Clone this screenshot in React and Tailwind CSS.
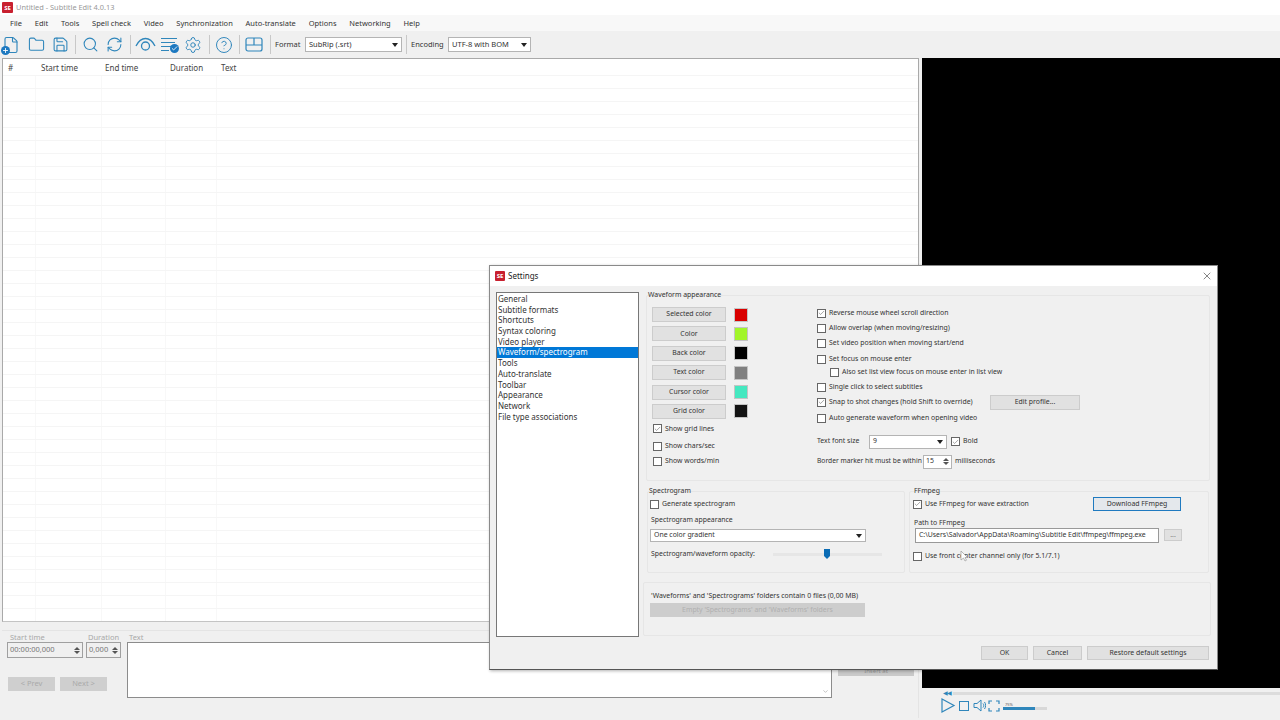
import { File, Folder, Save, Search, RefreshCw, Settings, CircleHelp, Plus, Check, ChevronDown, X } from "lucide-react";

const menus = ["File", "Edit", "Tools", "Spell check", "Video", "Synchronization", "Auto-translate", "Options", "Networking", "Help"];
const settingsPages = ["General", "Subtitle formats", "Shortcuts", "Syntax coloring", "Video player", "Waveform/spectrogram", "Tools", "Auto-translate", "Toolbar", "Appearance", "Network", "File type associations"];
const colorRows = [
  ["Selected color", "bg-[#d90000]"],
  ["Color", "bg-[#a2f52a]"],
  ["Back color", "bg-[#000000]"],
  ["Text color", "bg-[#808080]"],
  ["Cursor color", "bg-[#45e8c0]"],
  ["Grid color", "bg-[#141414]"],
];
const rows = Array.from({ length: 42 });

function Logo({ small }) {
  return (
    <div className={`flex items-center justify-center bg-[#c8202f] rounded-[1px] text-white font-bold leading-none ${small ? "w-[10px] h-[10px] text-[6px]" : "w-[11px] h-[11px] text-[6px]"}`}>
      SE
    </div>
  );
}

function Caret() {
  return <span className="w-0 h-0 border-l-[3px] border-r-[3px] border-t-[4px] border-l-transparent border-r-transparent border-t-[#222]" />;
}

function Spinner() {
  return (
    <span className="flex flex-col gap-[1px] items-center">
      <span className="w-0 h-0 border-l-[3px] border-r-[3px] border-b-[3px] border-l-transparent border-r-transparent border-b-[#555]" />
      <span className="w-0 h-0 border-l-[3px] border-r-[3px] border-t-[3px] border-l-transparent border-r-transparent border-t-[#555]" />
    </span>
  );
}

function Box({ checked, children, className = "" }) {
  return (
    <div className={`flex items-center h-[15px] gap-[3px] ${className}`}>
      <span className="flex items-center justify-center w-[9px] h-[9px] bg-white border border-[#666] shrink-0">
        {checked && <Check size={8} strokeWidth={1.5} className="text-[#333]" />}
      </span>
      <span className="whitespace-nowrap">{children}</span>
    </div>
  );
}

function Btn({ children, focused, className = "" }) {
  return (
    <div className={`flex items-center justify-center whitespace-nowrap ${focused ? "bg-[#e4e8ec] border-[1.5px] border-[#1f7ac0]" : "bg-[#e1e1e1] border border-[#cccccc]"} ${className}`}>
      {children}
    </div>
  );
}

function Combo({ value, className = "" }) {
  return (
    <div className={`flex items-center justify-between bg-white border border-[#b4b4b4] px-[3px] ${className}`}>
      <span className="whitespace-nowrap">{value}</span>
      <Caret />
    </div>
  );
}

function Group({ title, titleClass = "", className = "", children }) {
  return (
    <div className={`border border-[#e6e6e6] rounded-[2px] ${className}`}>
      {title && <div className={`-mt-[7px] h-[11px] leading-[11px] ${titleClass}`}>{title}</div>}
      {children}
    </div>
  );
}

function TopToolbar() {
  return (
    <div className="h-[27px] flex items-center bg-[#f0f0f0] text-[#2f86bb] text-[7.5px]">
      <div className="relative w-[18px] ml-[2px] mr-[8px]">
        <File size={18} strokeWidth={1.5} />
        <span className="absolute -left-[1px] top-[10px] w-[9px] h-[9px] rounded-full bg-[#1c78c0] flex items-center justify-center">
          <Plus size={7} strokeWidth={3} className="text-white" />
        </span>
      </div>
      <Folder size={17} strokeWidth={1.5} className="mr-[7px]" />
      <Save size={17} strokeWidth={1.5} className="mr-[6px]" />
      <span className="w-px h-[19px] bg-[#c8c8c8] mr-[6px]" />
      <Search size={17} strokeWidth={1.5} className="mr-[7px]" />
      <RefreshCw size={17} strokeWidth={1.5} className="mr-[7px]" />
      <span className="w-px h-[19px] bg-[#c8c8c8] mr-[4px]" />
      <svg width="21" height="17" viewBox="0 0 21 17" fill="none" stroke="currentColor" strokeWidth="1.3" className="mr-[5px]">
        <path d="M1 10C4 4 8 2.500 10.500 2.500S17 4 20 10" />
        <circle cx="10.500" cy="10" r="4" />
      </svg>
      <div className="relative w-[18px] h-[17px] mr-[5px]">
        <div className="flex flex-col gap-[3px] pt-[2px]">
          <span className="block w-[16px] h-[1px] bg-[#2f86bb]" />
          <span className="block w-[14px] h-[1px] bg-[#2f86bb]" />
          <span className="block w-[10px] h-[1px] bg-[#2f86bb]" />
          <span className="block w-[8px] h-[1px] bg-[#2f86bb]" />
        </div>
        <span className="absolute right-0 bottom-0 w-[9px] h-[9px] rounded-full bg-[#1c78c0] flex items-center justify-center">
          <Check size={7} strokeWidth={3} className="text-white" />
        </span>
      </div>
      <Settings size={18} strokeWidth={1.3} className="mr-[7px]" />
      <span className="w-px h-[19px] bg-[#c8c8c8] mr-[5px]" />
      <CircleHelp size={18} strokeWidth={1.3} className="mr-[6px]" />
      <span className="w-px h-[19px] bg-[#c8c8c8] mr-[5px]" />
      <svg width="18" height="15" viewBox="0 0 18 15" fill="none" stroke="currentColor" strokeWidth="1.2" className="mr-[7px]">
        <rect x="1" y="1" width="16" height="13" rx="2" />
        <path d="M1 8h16M9 1v7" />
      </svg>
      <span className="w-px h-[19px] bg-[#c8c8c8] mr-[4px]" />
      <span className="text-[#333] w-[30px]">Format</span>
      <Combo value="SubRip (.srt)" className="w-[97px] h-[15px] text-[#333]" />
      <span className="w-px h-[19px] bg-[#c8c8c8] mx-[4px]" />
      <span className="text-[#333] w-[37px]">Encoding</span>
      <Combo value="UTF-8 with BOM" className="w-[83px] h-[15px] text-[#333]" />
    </div>
  );
}

function SubtitleList() {
  return (
    <div className="h-[564px] border border-[#a9a9a9] border-b-[#c4c4c4] bg-white overflow-hidden">
      <div className="flex h-[16px] pt-[1px] items-center text-[#444]">
        <div className="w-[33px] pl-[5px]">#</div>
        <div className="w-[66px] pl-[5px]">Start time</div>
        <div className="w-[64px] pl-[3px]">End time</div>
        <div className="w-[51px] pl-[4px]">Duration</div>
        <div className="pl-[4px]">Text</div>
      </div>
      {rows.map((_, i) => (
        <div key={i} className="flex h-[13px] border-t border-[#f5f5f5]">
          <div className="w-[33px] border-r border-[#f8f8f8]" />
          <div className="w-[66px] border-r border-[#f8f8f8]" />
          <div className="w-[64px] border-r border-[#f8f8f8]" />
          <div className="w-[51px] border-r border-[#f8f8f8]" />
        </div>
      ))}
    </div>
  );
}

function EditPanel() {
  return (
    <div className="relative mt-[8px] h-[88px] border-t border-r border-[#e4e4e4] pl-[5px] text-[#a8a8a8] text-[7.5px] flex">
      <div className="w-[120px] pt-[1px]">
        <div className="flex h-[10px] leading-[10px]">
          <span className="w-[81px] pl-[3px]">Start time</span>
          <span>Duration</span>
        </div>
        <div className="flex gap-[3px] text-[#777]">
          <div className="w-[76px] h-[16px] border border-[#a0a0a0] flex items-center justify-between px-[2px]">
            00:00:00,000
            <Spinner />
          </div>
          <div className="w-[35px] h-[16px] border border-[#a0a0a0] flex items-center justify-between px-[2px]">
            0,000
            <Spinner />
          </div>
        </div>
        <div className="flex gap-[5px] mt-[19px] ml-[1px] text-[#aaa]">
          <div className="w-[47px] h-[14px] bg-[#cfcfcf] flex items-center justify-center">&lt; Prev</div>
          <div className="w-[47px] h-[14px] bg-[#cfcfcf] flex items-center justify-center">Next &gt;</div>
        </div>
      </div>
      <div className="pt-[1px]">
        <div className="h-[10px] leading-[10px] pl-[2px]">Text</div>
        <div className="relative w-[705px] h-[56px] bg-white border border-[#8c8c8c]">
          <ChevronDown size={7} className="absolute right-[2px] bottom-[2px] text-[#999]" />
        </div>
      </div>
      <div className="ml-[6px] mt-[33px] w-[76px] h-[12px] bg-[#c9c9c9] text-center text-[6px] leading-[14px] text-[#999]">Insert at</div>
    </div>
  );
}

function PlayerControls() {
  return (
    <div className="pl-[21px] pt-[2px] text-[#2f86bb]">
      <div className="flex items-center h-[6px]">
        <span className="text-[6px] leading-none tracking-[-1px] w-[10px]">◀◀</span>
        <div className="flex-1 h-[3px] bg-[#dcdcdc]" />
      </div>
      <div className="flex items-center mt-[1px] -ml-[3px]">
        <svg width="16" height="17" viewBox="0 0 16 17" fill="none" stroke="currentColor" strokeWidth="1.2" className="mr-[3px]">
          <path d="M2 2v13l12-6.500z" />
        </svg>
        <span className="w-[10px] h-[10px] border border-[#2f86bb] mr-[4px]" />
        <svg width="13" height="13" viewBox="0 0 13 13" fill="none" stroke="currentColor" strokeWidth="1" className="mr-[2px]">
          <path d="M1 4.500h3L8 1v11L4 8.500H1zM10 4.500c1 1 1 3 0 4M11.500 3c1.500 2 1.500 5 0 7" />
        </svg>
        <svg width="12" height="12" viewBox="0 0 12 12" fill="none" stroke="currentColor" strokeWidth="1.2" className="mr-[3px]">
          <path d="M1 4V1h3M8 1h3v3M11 8v3H8M4 11H1V8" />
        </svg>
        <div className="w-[44px]">
          <div className="text-[4px] leading-[5px] text-[#555] pl-[2px]">75%</div>
          <div className="flex h-[3px] bg-[#d8d8d8]">
            <div className="w-[32px] bg-[#2f86bb]" />
          </div>
        </div>
      </div>
    </div>
  );
}

function SettingsDialog() {
  return (
    <div className="absolute left-[489px] top-[265px] w-[729px] h-[405px] flex flex-col bg-[#f0f0f0] border border-[#8a8a8a] border-b-[#555] shadow-[1px_1px_3px_rgba(0,0,0,0.3)] text-[#333] text-[6.9px]">
      <div className="h-[20px] bg-white flex items-center pl-[5px] pr-[4px] shrink-0 text-[8px]">
        <Logo small />
        <span className="ml-[3px] text-[#222]">Settings</span>
        <X size={12} strokeWidth={1.2} className="ml-auto text-[#333]" />
      </div>
      <div className="flex flex-1">
        <div className="ml-[6px] mt-[6px] w-[143px] h-[345px] bg-white border border-[#777] pt-[1px] text-[8px]">
          {settingsPages.map((p) => (
            <div key={p} className={`h-[10.7px] leading-[10.7px] pl-[1px] whitespace-nowrap ${p === "Waveform/spectrogram" ? "bg-[#0078d7] text-white" : ""}`}>
              {p}
            </div>
          ))}
        </div>
        <div className="ml-[7px] w-[566px]">
          <Group title="Waveform appearance" titleClass="ml-[1px]" className="mt-[9px] h-[186px] w-[564px]">
            <div className="flex">
              <div className="w-[170px] pl-[5px]">
                <div className="flex flex-col gap-[4.4px] mt-[7px]">
                  {colorRows.map(([name, color]) => (
                    <div key={name} className="flex items-center">
                      <Btn className="w-[74px] h-[15px]">{name}</Btn>
                      <span className={`ml-[8px] w-[14px] h-[14px] border border-[#c4c4c4] ${color}`} />
                    </div>
                  ))}
                </div>
                <Box checked className="mt-[2.5px] ml-[1px]">Show grid lines</Box>
                <Box className="mt-[2.5px] ml-[1px]">Show chars/sec</Box>
                <Box className="ml-[1px]">Show words/min</Box>
              </div>
              <div className="pt-[5.5px] w-[390px]">
                <Box checked>Reverse mouse wheel scroll direction</Box>
                <Box>Allow overlap (when moving/resizing)</Box>
                <Box className="mt-[0.5px]">Set video position when moving start/end</Box>
                <Box className="mt-[0.5px]">Set focus on mouse enter</Box>
                <Box className="-mt-[2px] ml-[13px]">Also set list view focus on mouse enter in list view</Box>
                <Box>Single click to select subtitles</Box>
                <div className="flex items-center">
                  <Box checked className="w-[173px]">Snap to shot changes (hold Shift to override)</Box>
                  <Btn className="w-[90px] h-[15px]">Edit profile...</Btn>
                </div>
                <Box className="mt-[1px]">Auto generate waveform when opening video</Box>
                <div className="flex items-center mt-[8.5px] h-[15px]">
                  <span className="w-[52px] whitespace-nowrap">Text font size</span>
                  <Combo value="9" className="w-[78px] h-[14px]" />
                  <Box checked className="ml-[4px]">Bold</Box>
                </div>
                <div className="flex items-center mt-[5px] h-[15px]">
                  <span className="w-[106px] whitespace-nowrap text-[6.7px]">Border marker hit must be within</span>
                  <div className="w-[29px] h-[14px] flex items-center justify-between border border-[#b4b4b4] bg-white px-[2px]">
                    15
                    <Spinner />
                  </div>
                  <span className="ml-[3px]">milliseconds</span>
                </div>
              </div>
            </div>
          </Group>
          <div className="flex mt-[10px] gap-[4px] ml-[1px]">
            <Group title="Spectrogram" titleClass="-ml-[1px]" className="w-[258px] h-[82px] px-[2px]">
              <Box className="mt-[0.5px]">Generate spectrogram</Box>
              <div className="mt-[3.5px] ml-[1px] h-[10px] leading-[10px]">Spectrogram appearance</div>
              <Combo value="One color gradient" className="w-[216px] h-[13px] mt-[4px]" />
              <div className="flex items-center mt-[6px] h-[12px] ml-[1px]">
                <span className="w-[122px] whitespace-nowrap">Spectrogram/waveform opacity:</span>
                <div className="relative w-[109px] h-[3px] bg-[#e6e6e6]">
                  <svg width="6" height="10" viewBox="0 0 6 10" className="absolute left-[51px] -top-[4px]">
                    <path d="M0 0h6v7l-3 3-3-3z" fill="#0a6cb5" />
                  </svg>
                </div>
              </div>
            </Group>
            <Group title="FFmpeg" titleClass="ml-[1px]" className="w-[300px] h-[82px] px-[3px]">
              <div className="flex items-center justify-between pr-[24px]">
                <Box checked className="mt-[0.5px]">Use FFmpeg for wave extraction</Box>
                <Btn focused className="w-[88px] h-[14px]">Download FFmpeg</Btn>
              </div>
              <div className="mt-[6px] ml-[1px] h-[10px] leading-[10px]">Path to FFmpeg</div>
              <div className="flex items-center ml-[2px]">
                <div className="w-[244px] h-[15px] bg-white border border-[#999] px-[3px] flex items-center whitespace-nowrap">
                  {"C:\\Users\\Salvador\\AppData\\Roaming\\Subtitle Edit\\ffmpeg\\ffmpeg.exe"}
                </div>
                <Btn className="ml-[5px] w-[18px] h-[12px] text-[#777]">...</Btn>
              </div>
              <div className="relative mt-[6px]">
                <Box>Use front center channel only (for 5.1/7.1)</Box>
                <svg width="8" height="12" viewBox="0 0 8 12" className="absolute left-[47px] top-[1px]">
                  <path d="M1 1v9l2.500-2 1.500 3 1.500-.8L5 7.500h2.500z" fill="#fff" stroke="#999" strokeWidth="0.7" />
                </svg>
              </div>
            </Group>
          </div>
          <Group className="mt-[9px] -ml-[3px] w-[568px] h-[54px] pl-[7px] pt-[6.5px]">
            <div className="h-[11px] leading-[11px] whitespace-nowrap">'Waveforms' and 'Spectrograms' folders contain 0 files (0,00 MB)</div>
            <div className="mt-[2.5px] -ml-[1px] w-[215px] h-[14px] bg-[#cdcdcd] flex items-center justify-center text-[#b0b0b0]">Empty 'Spectrograms' and 'Waveforms' folders</div>
          </Group>
        </div>
      </div>
      <div className="flex justify-end gap-[5px] pr-[8px] pb-[9px]">
        <Btn className="w-[47px] h-[14px]">OK</Btn>
        <Btn className="w-[49px] h-[14px]">Cancel</Btn>
        <Btn className="w-[122px] h-[14px]">Restore default settings</Btn>
      </div>
    </div>
  );
}

export default function App() {
  return (
    <div className="relative w-[1280px] h-[720px] overflow-hidden bg-[#f0f0f0] text-[8px] text-[#333] font-['Noto_Sans',sans-serif]">
      <div className="h-[15px] bg-white flex items-center pl-[2px]">
        <Logo />
        <span className="ml-[3px] text-[#999] text-[7.4px]">Untitled - Subtitle Edit 4.0.13</span>
      </div>
      <div className="h-[16px] pt-[1px] bg-[#f8f8f8] flex items-center pl-[10px] gap-[12.8px] text-[#333] text-[7.5px]">
        {menus.map((m) => (
          <span key={m}>{m}</span>
        ))}
      </div>
      <TopToolbar />
      <div className="flex h-[662px]">
        <div className="w-[919px] pl-[2px] shrink-0">
          <SubtitleList />
          <EditPanel />
        </div>
        <div className="flex-1 ml-[3px]">
          <div className="h-[630px] bg-black" />
          <PlayerControls />
        </div>
      </div>
      <SettingsDialog />
    </div>
  );
}
